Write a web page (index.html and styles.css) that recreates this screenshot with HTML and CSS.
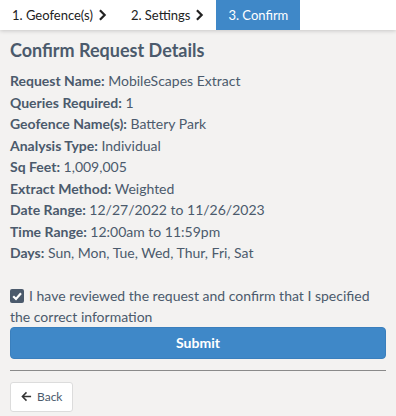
FILE: index.html
```html
<!DOCTYPE html>
<html>
<head>
<meta charset="utf-8">
<link rel="stylesheet" href="styles.css">
</head>
<body>
<nav class="steps">
  <div class="step">1. Geofence(s) <svg class="chev" viewBox="0 0 10 14" width="9" height="12"><path d="M2 1.5 L7.5 7 L2 12.5" fill="none" stroke="#222" stroke-width="2.6"/></svg></div>
  <div class="step">2. Settings <svg class="chev" viewBox="0 0 10 14" width="9" height="12"><path d="M2 1.5 L7.5 7 L2 12.5" fill="none" stroke="#222" stroke-width="2.6"/></svg></div>
  <div class="step active">3. Confirm</div>
</nav>
<main class="content">
  <h1 class="title">Confirm Request Details</h1>
  <ul class="details">
    <li><b>Request Name:</b> MobileScapes Extract</li>
    <li><b>Queries Required:</b> 1</li>
    <li><b>Geofence Name(s):</b> Battery Park</li>
    <li><b>Analysis Type:</b> Individual</li>
    <li><b>Sq Feet:</b> 1,009,005</li>
    <li><b>Extract Method:</b> Weighted</li>
    <li><b>Date Range:</b> 12/27/2022 to 11/26/2023</li>
    <li><b>Time Range:</b> 12:00am to 11:59pm</li>
    <li><b>Days:</b> Sun, Mon, Tue, Wed, Thur, Fri, Sat</li>
  </ul>
  <label class="confirm"><span class="box"><svg viewBox="0 0 14 14" width="14" height="14"><path d="M3.2 7.2 L6 10 L11 4.2" fill="none" stroke="#fff" stroke-width="2.2"/></svg></span>I have reviewed the request and confirm that I specified the correct information</label>
  <button class="submit">Submit</button>
  <hr class="rule">
  <button class="back"><svg viewBox="0 0 12 12" width="11" height="11"><path d="M11 6 H2 M6 1.5 L1.5 6 L6 10.5" fill="none" stroke="#333" stroke-width="1.6"/></svg>Back</button>
</main>
</body>
</html>
```
FILE: styles.css
```css
* { box-sizing: border-box; }
html, body { margin: 0; padding: 0; }
body {
  background: #f3f2f1;
  font-family: Lato, "Noto Sans", sans-serif;
  color: #4a5568;
  width: 396px;
  height: 416px;
  overflow: hidden;
}
.steps {
  display: flex;
  height: 30px;
  background: #fff;
  box-shadow: 0 1px 4px rgba(0,0,0,0.18);
}
.step {
  display: flex;
  align-items: center;
  gap: 5px;
  font-size: 13px;
  color: #222;
  padding: 0 12px;
}
.step.active {
  background: #3f88c8;
  color: #fff;
}
.content { padding: 8px 10px 0 10px; }
.title {
  margin: 0 0 8px 0;
  font-size: 18px;
  font-weight: 700;
  line-height: 24px;
  color: #4b5a6c;
}
.details { list-style: none; margin: 0; padding: 0; }
.details li { font-size: 14px; line-height: 21.5px; color: #4b5a6c; }
.details b { font-weight: 700; }
.confirm {
  display: block;
  margin-top: 21px;
  font-size: 14px;
  line-height: 21px;
  color: #4b5a6c;
}
.box {
  display: inline-flex;
  align-items: center;
  justify-content: center;
  width: 14px;
  height: 14px;
  background: #4b5a6c;
  border-radius: 2px;
  vertical-align: -2px;
  margin-right: 5px;
}
.submit {
  display: block;
  width: 100%;
  height: 32px;
  margin-top: 0;
  border: 1px solid #3a7fbd;
  border-radius: 4px;
  background: #3f88c8;
  color: #fff;
  font-family: inherit;
  font-weight: 700;
  font-size: 14px;
}
.rule {
  margin: 11px 0 11px 0;
  border: 0;
  border-top: 1px solid #8a8a8a;
}
.back {
  display: flex;
  align-items: center;
  gap: 5px;
  height: 30px;
  padding: 0 10px;
  background: #fff;
  border: 1px solid #dcdcdc;
  border-radius: 3px;
  font-family: inherit;
  font-size: 12px;
  color: #4b5a6c;
}
```
